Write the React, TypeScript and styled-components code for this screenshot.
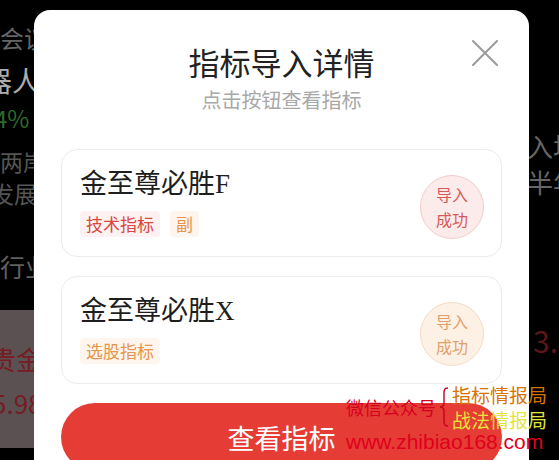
import styled, { createGlobalStyle } from "styled-components";

const GlobalStyle = createGlobalStyle`
    html, body {
        margin: 0;
        padding: 0;
        background: #000;
    }
    body {
        font-family: "Noto Sans CJK SC", "Noto Sans", sans-serif;
    }
`

const Screen = styled.div`
    position: relative;
    width: 559px;
    height: 460px;
    overflow: hidden;
    background: #000;
`
const Backdrop = styled.div`
    display: flex;
    justify-content: space-between;
    height: 100%;
`
const SideCol = styled.div<{ $width: number }>`
    display: flex;
    flex-direction: column;
    width: ${p => p.$width}px;
    overflow: hidden;
    white-space: nowrap;
`
const BgText = styled.div<{ $size: number; $color: string; $top: number; $shift?: number }>`
    margin-top: ${p => p.$top}px;
    margin-left: ${p => p.$shift ?? 0}px;
    font-size: ${p => p.$size}px;
    line-height: ${p => p.$size + 6}px;
    color: ${p => p.$color};
`
const QuoteBlock = styled.div`
    margin-top: 28px;
    height: 138px;
    background: #5b5152;
    display: flex;
    flex-direction: column;
`

const Modal = styled.div`
    position: absolute;
    left: 34px;
    top: 10px;
    width: 495px;
    height: 480px;
    box-sizing: border-box;
    padding: 32px 27px 0;
    background: #fff;
    border-radius: 16px;
    display: flex;
    flex-direction: column;
`
const Header = styled.div`
    display: flex;
    flex-direction: column;
    align-items: center;
`
const Title = styled.h2`
    margin: 0;
    font-size: 31px;
    line-height: 40px;
    font-weight: 400;
    color: #222;
`
const Subtitle = styled.p`
    margin: 5px 0 0;
    font-size: 20px;
    line-height: 26px;
    color: #a8a8a8;
`
const CloseButton = styled.button`
    position: absolute;
    top: 29px;
    right: 30px;
    width: 28px;
    height: 28px;
    padding: 0;
    border: none;
    background: none;
    color: #9a9a9a;
    cursor: pointer;
`
const CardList = styled.div`
    display: flex;
    flex-direction: column;
    gap: 19px;
    margin-top: 36px;
`
const Card = styled.div`
    display: flex;
    align-items: center;
    justify-content: space-between;
    height: 108px;
    box-sizing: border-box;
    padding: 0 17px 0 18px;
    border: 1px solid #ececec;
    border-radius: 16px;
`
const CardInfo = styled.div`
    display: flex;
    flex-direction: column;
    gap: 10px;
    margin-top: -2px;
`
const CardTitle = styled.div`
    font-family: "Liberation Serif", "Noto Sans CJK SC", serif;
    font-size: 27px;
    line-height: 34px;
    color: #1e1e1e;
`
const TagRow = styled.div`
    display: flex;
    gap: 10px;
`
const Tag = styled.span<{ $tone: "red" | "orange" }>`
    padding: 0 6px;
    font-size: 17px;
    line-height: 26px;
    border-radius: 4px;
    color: ${p => (p.$tone === "red" ? "#d9473f" : "#e8944a")};
    background: ${p => (p.$tone === "red" ? "#fdf2f1" : "#fef6ee")};
`
const Badge = styled.div<{ $tone: "red" | "orange" }>`
    width: 62px;
    height: 62px;
    margin-top: 8px;
    border-radius: 50%;
    display: flex;
    flex-direction: column;
    align-items: center;
    justify-content: center;
    font-size: 16px;
    line-height: 25px;
    color: ${p => (p.$tone === "red" ? "#d65a5a" : "#e3a06a")};
    background: ${p => (p.$tone === "red" ? "#fcebeb" : "#fdf1e6")};
    border: 1px solid ${p => (p.$tone === "red" ? "#f1cdcd" : "#f4dcc4")};
`
const ViewButton = styled.button`
    margin-top: 19px;
    height: 68px;
    border: none;
    border-radius: 34px;
    background: #e63c36;
    color: #fff;
    font-family: "Noto Sans CJK SC", sans-serif;
    font-size: 27px;
    cursor: pointer;
`

const Watermark = styled.div`
    position: absolute;
    left: 346px;
    top: 382px;
    display: grid;
    grid-template-columns: auto 12px auto;
    align-items: center;
    column-gap: 2px;
`
const WmLabel = styled.span<{ $color: string; $size: number }>`
    font-size: ${p => p.$size}px;
    line-height: 25px;
    color: ${p => p.$color};
    white-space: nowrap;
`
const WmStack = styled.div`
    display: flex;
    flex-direction: column;
`
const WmUrl = styled.span`
    grid-column: 1 / 4;
    margin-top: -3px;
    font-family: "Liberation Sans", sans-serif;
    font-size: 21px;
    line-height: 26px;
    color: #e0001c;
    white-space: nowrap;
`

function CloseIcon() {
    return (
        <svg width="28" height="28" viewBox="0 0 28 28" fill="none" stroke="currentColor" strokeWidth="2" strokeLinecap="round">
            <path d="M2 2 L26 26 M26 2 L2 26" />
        </svg>
    )
}

function Brace() {
    return (
        <svg width="12" height="42" viewBox="0 0 12 42" fill="none" stroke="#c8001c" strokeWidth="1.4">
            <path d="M10 2 C6 2 6 4 6 8 L6 17 C6 20 4 21 2 21 C4 21 6 22 6 25 L6 34 C6 38 6 40 10 40" />
        </svg>
    )
}

const indicators = [
    { name: "金至尊必胜F", tags: [{ text: "技术指标", tone: "red" as const }, { text: "副", tone: "orange" as const }], tone: "red" as const },
    { name: "金至尊必胜X", tags: [{ text: "选股指标", tone: "orange" as const }], tone: "orange" as const },
];

export default function App() {
    return (
        <>
            <GlobalStyle />
            <Screen>
                <Backdrop>
                    <SideCol $width={34}>
                        <BgText $size={24} $color="#666" $top={23}>会议</BgText>
                        <BgText $size={28} $color="#acacac" $top={10} $shift={-16}>器人</BgText>
                        <BgText $size={24} $color="#2a6b2c" $top={6} $shift={-6}>4%</BgText>
                        <BgText $size={23} $color="#555" $top={14}>两岸</BgText>
                        <BgText $size={23} $color="#555" $top={3} $shift={-9}>发展</BgText>
                        <BgText $size={25} $color="#606060" $top={43}>行业</BgText>
                        <QuoteBlock>
                            <BgText $size={26} $color="#761c23" $top={33} $shift={-10}>贵金</BgText>
                            <BgText $size={26} $color="#761c23" $top={12} $shift={-8}>5.98</BgText>
                        </QuoteBlock>
                    </SideCol>
                    <SideCol $width={30}>
                        <BgText $size={26} $color="#666" $top={130} $shift={-2}>入场</BgText>
                        <BgText $size={26} $color="#666" $top={4} $shift={-2}>半年</BgText>
                        <BgText $size={30} $color="#5c1519" $top={124} $shift={4}>3.</BgText>
                    </SideCol>
                </Backdrop>

                <Modal>
                    <CloseButton aria-label="close"><CloseIcon /></CloseButton>
                    <Header>
                        <Title>指标导入详情</Title>
                        <Subtitle>点击按钮查看指标</Subtitle>
                    </Header>
                    <CardList>
                        {indicators.map(item => (
                            <Card key={item.name}>
                                <CardInfo>
                                    <CardTitle>{item.name}</CardTitle>
                                    <TagRow>
                                        {item.tags.map(t => <Tag key={t.text} $tone={t.tone}>{t.text}</Tag>)}
                                    </TagRow>
                                </CardInfo>
                                <Badge $tone={item.tone}>
                                    <span>导入</span>
                                    <span>成功</span>
                                </Badge>
                            </Card>
                        ))}
                    </CardList>
                    <ViewButton>查看指标</ViewButton>
                </Modal>

                <Watermark>
                    <WmLabel $color="#d4001f" $size={18}>微信公众号</WmLabel>
                    <Brace />
                    <WmStack>
                        <WmLabel $color="#d77400" $size={19}>指标情报局</WmLabel>
                        <WmLabel $color="#e4e43a" $size={19}>战法情报局</WmLabel>
                    </WmStack>
                    <WmUrl>www.zhibiao168.com</WmUrl>
                </Watermark>
            </Screen>
        </>
    )
}
